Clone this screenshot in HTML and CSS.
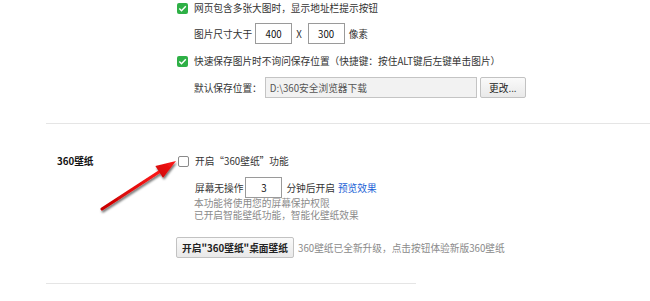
FILE: index.html
```html
<!DOCTYPE html>
<html lang="zh-CN">
<head>
<meta charset="utf-8">
<link rel="stylesheet" href="styles.css">
</head>
<body>
<div class="page">
  <div class="top">
    <div class="row r1">
      <span class="cb on"><svg viewBox="0 0 11 11" width="11" height="11"><path d="M2.3 5.6 L4.5 7.8 L8.8 3.2" fill="none" stroke="#fff" stroke-width="1.4"/></svg></span>
      <span>网页包含多张大图时，显示地址栏提示按钮</span>
    </div>
    <div class="row sub r2">
      <span>图片尺寸大于</span>
      <span class="inp num">400</span>
      <span class="x">X</span>
      <span class="inp num">300</span>
      <span class="after">像素</span>
    </div>
    <div class="row r3">
      <span class="cb on"><svg viewBox="0 0 11 11" width="11" height="11"><path d="M2.3 5.6 L4.5 7.8 L8.8 3.2" fill="none" stroke="#fff" stroke-width="1.4"/></svg></span>
      <span>快速保存图片时不询问保存位置（快捷键：按住ALT键后左键单击图片）</span>
    </div>
    <div class="row sub r4">
      <span>默认保存位置：</span>
      <span class="inp path">D:\360安全浏览器下载</span>
      <span class="btn change">更改...</span>
    </div>
  </div>
  <div class="divider"></div>
  <div class="wall">
    <div class="label">360壁纸</div>
    <div class="content">
      <div class="row w1">
        <span class="cb off"></span>
        <span>开启“360壁纸”功能</span>
      </div>
      <div class="row sub w2">
        <span>屏幕无操作</span>
        <span class="inp num">3</span>
        <span class="after">分钟后开启</span>
        <span class="link">预览效果</span>
      </div>
      <p class="notes">本功能将使用您的屏幕保护权限<br>已开启智能壁纸功能，智能化壁纸效果</p>
      <div class="row w3">
        <span class="btn big">开启"360壁纸"桌面壁纸</span>
        <span class="gray">360壁纸已全新升级，点击按钮体验新版360壁纸</span>
      </div>
    </div>
  </div>
  <div class="divider bottom"></div>
  <svg class="arrow" width="200" height="230" viewBox="0 0 200 230">
    <defs>
      <linearGradient id="ag" x1="0" y1="1" x2="1" y2="0">
        <stop offset="0" stop-color="#c80000"/>
        <stop offset="1" stop-color="#ff1a1a"/>
      </linearGradient>
      <filter id="sh" x="-20%" y="-20%" width="140%" height="140%">
        <feDropShadow dx="1" dy="2" stdDeviation="1.2" flood-color="#000" flood-opacity="0.55"/>
      </filter>
    </defs>
    <g filter="url(#sh)">
      <line x1="102" y1="209" x2="162" y2="170" stroke="url(#ag)" stroke-width="3.2" stroke-linecap="round"/>
      <polygon points="176,161 155.4,166 163,177.8" fill="url(#ag)"/>
    </g>
  </svg>
</div>
</body>
</html>
```

FILE: styles.css
```css
html, body {
  margin: 0;
  padding: 0;
  background: #fff;
}
body {
  font-family: "Noto Sans CJK SC", "Microsoft YaHei", sans-serif;
  font-size: 9.7px;
  color: #333;
}
.page {
  position: relative;
  width: 650px;
  height: 301px;
  overflow: hidden;
}
.top {
  padding-left: 177px;
}
.row {
  display: flex;
  align-items: center;
  white-space: nowrap;
}
.row .cb {
  margin-right: 6px;
}
.sub {
  padding-left: 17px;
}
.r1 { height: 16px; }
.r2 { height: 21px; margin-top: 7px; }
.r3 { height: 16px; margin-top: 9px; }
.r4 { height: 21px; margin-top: 8px; }
.cb {
  display: inline-block;
  width: 11px;
  height: 11px;
  box-sizing: border-box;
  border-radius: 2px;
  flex: none;
}
.cb svg { display: block; }
.cb.on {
  background: #2eb046;
}
.cb.off {
  border: 1px solid #8a8a8a;
  background: #fff;
}
.inp {
  display: inline-flex;
  align-items: center;
  box-sizing: border-box;
  height: 21px;
  border: 1px solid #9a9a9a;
  background: #fff;
  color: #111;
}
.inp.num {
  width: 37px;
  justify-content: center;
  margin-left: 3px;
}
.x {
  margin: 0 3px 0 4px;
}
.after {
  margin-left: 4px;
}
.inp.path {
  width: 212px;
  margin-left: 3px;
  padding-left: 4px;
  background: #f2f2f2;
  border-color: #c4c4c4;
  color: #555;
}
.btn {
  display: inline-flex;
  align-items: center;
  justify-content: center;
  box-sizing: border-box;
  height: 21px;
  border: 1px solid #c2c2c2;
  border-radius: 2px;
  background: linear-gradient(#fafafa, #e9e9e9);
  color: #222;
}
.btn.change {
  width: 46px;
  margin-left: 3px;
}
.divider {
  margin: 25px 0 0 46px;
  height: 1px;
  background: #e5e5e5;
}
.wall {
  display: flex;
  margin-top: 29px;
}
.label {
  width: 121px;
  padding-left: 57px;
  font-weight: bold;
  color: #111;
  line-height: 16px;
}
.w1 { height: 16px; }
.w2 { height: 21px; margin-top: 8px; }
.w2 .inp.num { margin-left: 2px; }
.link {
  color: #1a5fd6;
  margin-left: 3px;
}
.notes {
  margin: 0;
  padding-left: 16px;
  color: #8a8a8a;
  font-family: "Liberation Sans", "Noto Sans CJK SC", sans-serif;
  line-height: 12px;
}
.w3 {
  margin-top: 15px;
  height: 21px;
  margin-left: -2px;
}
.btn.big {
  width: 118px;
  font-weight: bold;
  margin-right: 4px;
}
.gray {
  color: #8a8a8a;
}
.divider.bottom {
  margin-top: 25px;
  width: 370px;
}
.arrow {
  position: absolute;
  left: 0;
  top: 0;
  pointer-events: none;
}
```
